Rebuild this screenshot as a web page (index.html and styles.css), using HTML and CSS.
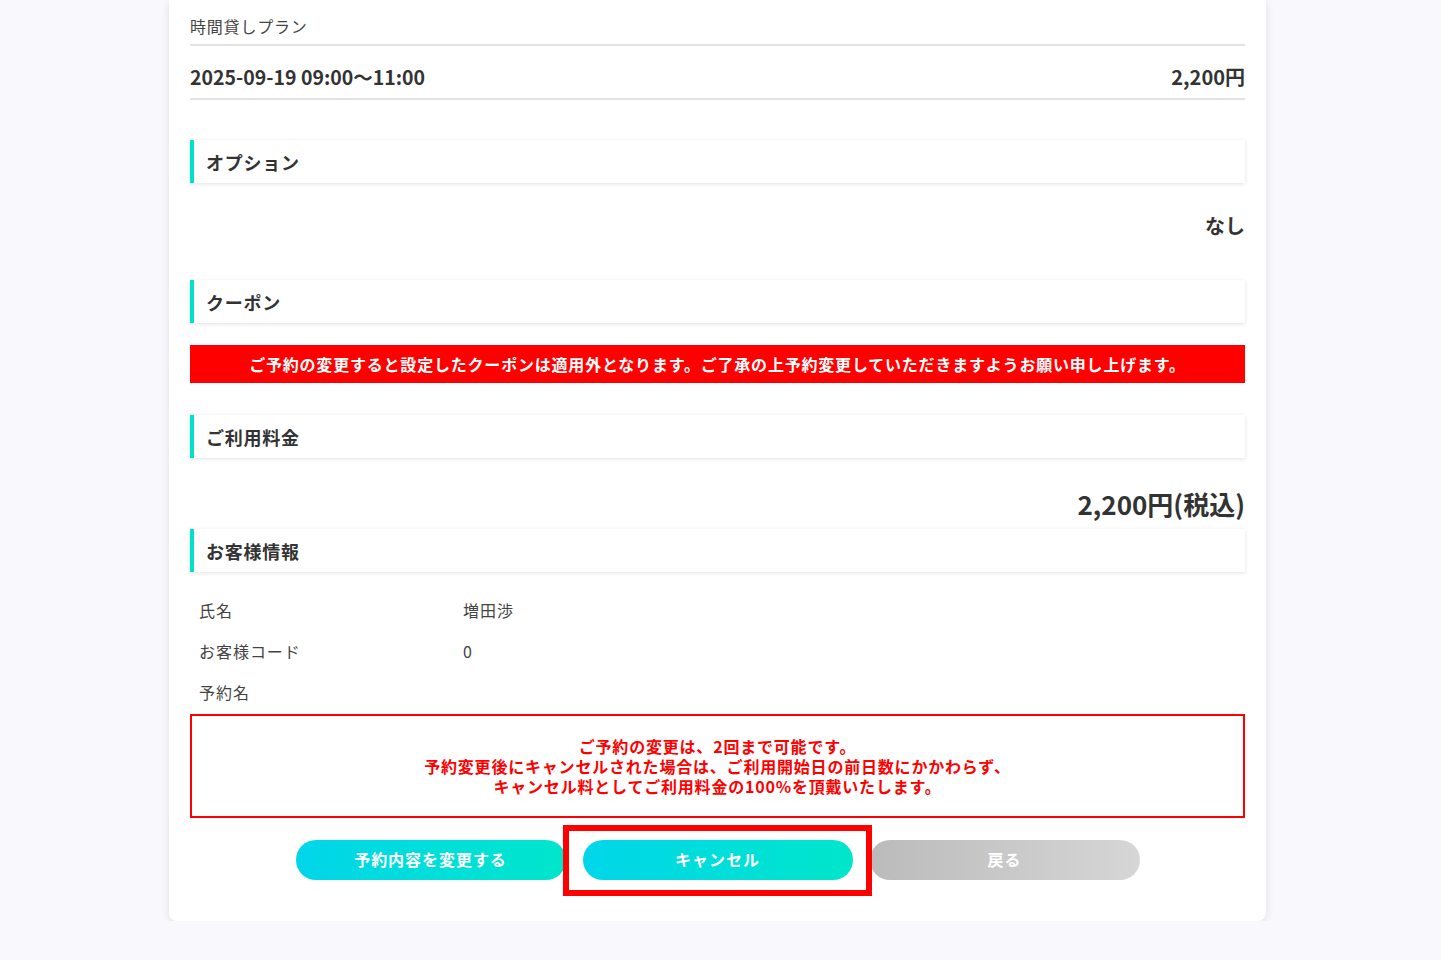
FILE: index.html
```html
<!DOCTYPE html>
<html lang="ja">

<head>
  <meta charset="UTF-8">
  <meta name="viewport" content="width=device-width, initial-scale=1.0">
  <title>予約内容の確認</title>
  <link rel="stylesheet" href="styles.css">
</head>

<body>
  <div class="page">
    <div class="reserve-box">
      <p class="plan-name">時間貸しプラン</p>
      <div class="plan-row">
        <span class="plan-date">2025-09-19 09:00〜11:00</span>
        <span class="plan-price">2,200円</span>
      </div>

      <h2 class="section-title">オプション</h2>
      <p class="value-right">なし</p>

      <h2 class="section-title">クーポン</h2>
      <p class="coupon-alert">ご予約の変更すると設定したクーポンは適用外となります。ご了承の上予約変更していただきますようお願い申し上げます。</p>

      <h2 class="section-title">ご利用料金</h2>
      <p class="total">2,200円(税込)</p>

      <h2 class="section-title">お客様情報</h2>
      <dl class="customer">
        <div class="customer-row">
          <dt>氏名</dt>
          <dd>増田渉</dd>
        </div>
        <div class="customer-row">
          <dt>お客様コード</dt>
          <dd>0</dd>
        </div>
        <div class="customer-row">
          <dt>予約名</dt>
          <dd></dd>
        </div>
      </dl>

      <div class="notice">
        <p>ご予約の変更は、2回まで可能です。</p>
        <p>予約変更後にキャンセルされた場合は、ご利用開始日の前日数にかかわらず、</p>
        <p>キャンセル料としてご利用料金の100%を頂戴いたします。</p>
      </div>

      <div class="buttons">
        <button type="button" class="btn btn-main">予約内容を変更する</button>
        <div class="btn-wrap">
          <button type="button" class="btn btn-main">キャンセル</button>
          <span class="highlight"></span>
        </div>
        <button type="button" class="btn btn-back">戻る</button>
      </div>
    </div>
  </div>
</body>

</html>
```

FILE: styles.css
```css
body {
  margin: 0;
  background-color: #f8f8fd;
  font-family: "Noto Sans CJK JP", "Noto Sans", sans-serif;
  color: #333;
}

.page {
  padding-right: 6px;
}

.reserve-box {
  width: 1097px;
  box-sizing: border-box;
  margin: 0 auto;
  background-color: #fff;
  border-radius: 0 0 8px 8px;
  box-shadow: 0 2px 8px rgba(20, 20, 60, 0.1);
  padding: 14px 21px 41px;
}

.plan-name {
  margin: 0;
  font-size: 16px;
  line-height: 24px;
  letter-spacing: 0.05em;
  color: #444;
  padding-bottom: 6px;
  border-bottom: 2px solid #e2e2e2;
}

.plan-row {
  display: flex;
  justify-content: space-between;
  align-items: center;
  height: 44px;
  padding-top: 8px;
  font-weight: bold;
  border-bottom: 2px solid #e2e2e2;
}

.plan-date {
  font-size: 19.5px;
}

.plan-price {
  font-size: 20px;
}

.section-title {
  margin: 40px 0 0;
  height: 43px;
  display: flex;
  align-items: center;
  padding-left: 12px;
  border-left: 4px solid #00e2c7;
  box-shadow: 0 1px 4px rgba(0, 0, 0, 0.12);
  font-size: 18px;
  font-weight: bold;
  letter-spacing: 0.04em;
  color: #333;
}

.value-right {
  margin: 0;
  padding-top: 26px;
  text-align: right;
  font-size: 20px;
  line-height: 34px;
  font-weight: bold;
}

.value-right + .section-title {
  margin-top: 37px;
}

.coupon-alert {
  margin: 22px 0 0;
  height: 38px;
  display: flex;
  align-items: center;
  justify-content: center;
  background-color: #ff0000;
  color: #fff;
  font-size: 16px;
  letter-spacing: 0.8px;
  font-weight: bold;
}

.coupon-alert + .section-title {
  margin-top: 32px;
}

.total {
  margin: 0;
  padding-top: 26px;
  text-align: right;
  font-size: 26px;
  line-height: 40px;
  font-weight: bold;
}

.total + .section-title {
  margin-top: 5px;
}

.customer {
  margin: 17px 0 0;
}

.customer-row {
  display: flex;
  height: 41px;
  align-items: center;
  font-size: 16px;
  letter-spacing: 0.06em;
  color: #444;
}

.customer-row dt {
  width: 264px;
  padding-left: 9px;
}

.customer-row dd {
  margin: 0;
}

.notice {
  margin-top: 2px;
  border: 2px solid #ff0000;
  padding: 20px 0;
  text-align: center;
  color: #ff0000;
  font-size: 16px;
  letter-spacing: 0.8px;
  font-weight: bold;
}

.notice p {
  margin: 0;
  height: 20px;
  line-height: 20px;
}

.buttons {
  display: flex;
  justify-content: center;
  gap: 17px;
  margin-top: 22px;
}

.btn-wrap {
  position: relative;
}

.btn {
  width: 270px;
  height: 40px;
  padding: 0 0 3px;
  border: none;
  border-radius: 20px;
  color: #fff;
  font-family: inherit;
  font-size: 16px;
  letter-spacing: 0.06em;
  font-weight: bold;
  cursor: pointer;
}

.btn-main {
  background: linear-gradient(to right, #00d6e9, #00e6cb);
}

.btn-back {
  background: linear-gradient(to right, #bbbbbb, #d6d6d6);
}

.highlight {
  position: absolute;
  left: -20px;
  right: -19px;
  top: -15px;
  bottom: -16px;
  border: 6px solid #ff0000;
  pointer-events: none;
}
```
